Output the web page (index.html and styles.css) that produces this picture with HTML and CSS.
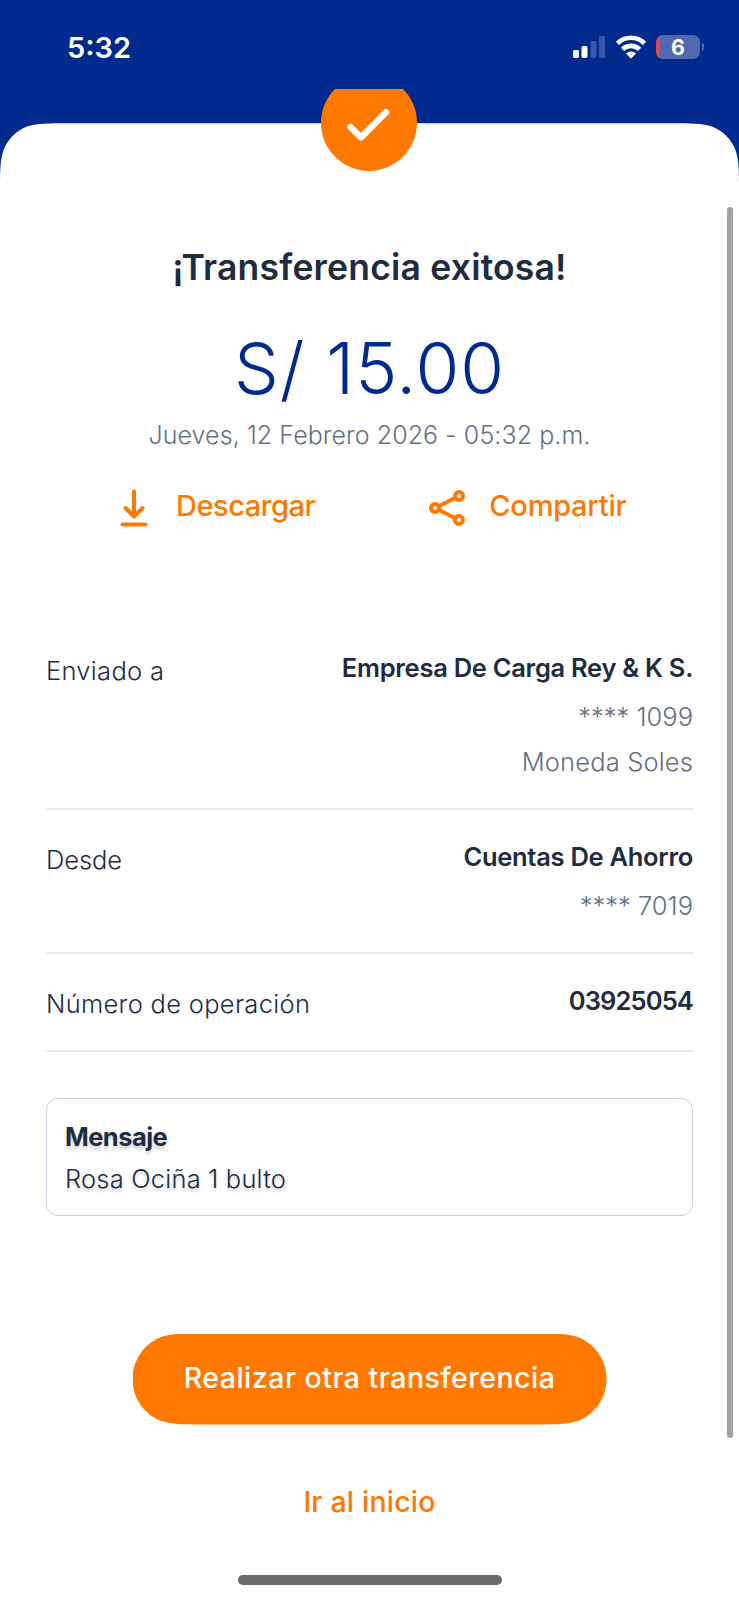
FILE: index.html
```html
<!DOCTYPE html>
<html lang="es">
<head>
<meta charset="utf-8">
<title>Transferencia exitosa</title>
<link rel="stylesheet" href="styles.css">
</head>
<body>
<div class="screen">
  <header class="status">
    <span class="clock">5:32</span>
    <div class="status-icons">
      <svg class="signal" width="34" height="24" viewBox="0 0 34 24"><g fill="#fff"><rect x="1" y="15" width="6" height="8" rx="1.7"/><rect x="9.5" y="11" width="6" height="12" rx="1.7"/><g opacity=".22"><rect x="18.5" y="6" width="6" height="17" rx="1.7"/><rect x="27" y="1" width="6" height="22" rx="1.7"/></g></g></svg>
      <svg class="wifi" width="32" height="24" viewBox="0 0 32 24"><g fill="none" stroke="#fff" stroke-width="4.6"><path d="M2.500 8.400a19.100 19.100 0 0 1 27 0"/><path d="M7.500 14.400a12 12 0 0 1 17 0"/></g><path d="M11 18.600a7.200 7.200 0 0 1 10 0l-4.300 4.300a1 1 0 0 1-1.400 0z" fill="#fff"/></svg>
      <div class="battery">6</div>
      <i class="battery-tip"></i>
    </div>
  </header>
  <main class="sheet">
    <h1 class="title">¡Transferencia exitosa!</h1>
    <p class="amount">S/ 15.00</p>
    <p class="date">Jueves, 12 Febrero 2026 - 05:32 p.m.</p>
    <div class="actions">
      <a class="action download"><svg width="28" height="38" viewBox="0 0 28 38" fill="none" stroke="#ff7800" stroke-width="4" stroke-linecap="round" stroke-linejoin="round"><path d="M14 2.500V26M5.500 19l8.500 8.500 8.500-8.500M2.500 35.500h23"/></svg><span>Descargar</span></a>
      <a class="action share"><svg width="36" height="38" viewBox="0 0 36 38" fill="none" stroke="#ff7800" stroke-width="4"><circle cx="6" cy="19" r="4"/><circle cx="30" cy="7" r="4"/><circle cx="30" cy="31" r="4"/><path d="M9.500 17.300l17-8.500M9.500 20.700l17 8.500"/></svg><span>Compartir</span></a>
    </div>
    <section class="details">
      <div class="row">
        <div class="label">Enviado a</div>
        <div class="values"><strong>Empresa De Carga Rey &amp; K S.</strong><span class="sub">**** 1099</span><span class="sub currency">Moneda Soles</span></div>
      </div>
      <div class="row">
        <div class="label short">Desde</div>
        <div class="values"><strong>Cuentas De Ahorro</strong><span class="sub">**** 7019</span></div>
      </div>
      <div class="row operation">
        <div class="label">Número de operación</div>
        <div class="values"><strong>03925054</strong></div>
      </div>
    </section>
    <section class="message">
      <h2>Mensaje</h2>
      <p>Rosa Ociña 1 bulto</p>
    </section>
    <button class="primary">Realizar otra transferencia</button>
    <a class="home-link">Ir al inicio</a>
    <div class="home-indicator"></div>
  </main>
  <div class="badge"><svg width="96" height="83" viewBox="0 0 96 83"><path d="M14 0H82A48 48 0 1 1 14 0z" fill="#ff7800"/><path d="M29.500 38L40 48.500L65 23.200" fill="none" stroke="#fff" stroke-width="6.500" stroke-linecap="round" stroke-linejoin="round"/></svg></div>
  <div class="scrollbar"></div>
</div>
</body>
</html>
```
FILE: styles.css
```css
* { box-sizing: border-box; }
body { margin: 0; background: #fff; }
h1, h2, p { margin: 0; font-weight: inherit; }
.screen {
  position: relative;
  width: 739px;
  height: 1600px;
  overflow: hidden;
  background: #002a8d;
  color: #1f2c40;
  font-family: Inter, "Noto Sans", sans-serif;
  font-weight: 300;
  white-space: nowrap;
}
.status { height: 123px; padding: 30px 35px 0 67px; display: flex; justify-content: space-between; align-items: flex-start; color: #fff; }
.clock { font-size: 29px; line-height: 35px; font-weight: 600; }
.status-icons { display: flex; align-items: center; padding-top: 5px; }
.wifi { margin: 0 9px; }
.battery { width: 44px; height: 24px; border-radius: 7px; background: linear-gradient(90deg, #dd4557 4px, #5069b0 4px); text-align: center; font-weight: 700; font-size: 21.5px; line-height: 24px; }
.battery-tip { width: 2px; height: 8px; margin-left: 2px; border-radius: 0 3px 3px 0; background: #5069b0; }
.sheet {
  height: 1477px;
  background: #fefefe;
  display: flex;
  flex-direction: column;
  clip-path: path("M0 1477V67.3C0 47.9 0 38.2 3.3 27.8C7.4 16.4 16.4 7.4 27.8 3.3C38.2 0.3 47.9 0.3 67.3 0.3H671.7C691.1 0.3 700.8 0.3 711.2 3.3C722.6 7.4 731.6 16.4 735.7 27.8C739 38.2 739 47.9 739 67.3V1477Z");
}
.sheet > * { flex-shrink: 0; }
.title { margin-top: 122px; text-align: center; font-size: 35.5px; line-height: 46px; font-weight: 600; letter-spacing: .2px; }
.amount { margin-top: 33px; text-align: center; font-size: 71px; line-height: 88px; color: #002a8d; letter-spacing: .9px; }
.date { margin-top: 7px; text-align: center; font-size: 25px; line-height: 32px; color: #657084; letter-spacing: .08px; }
.actions { margin-top: 31px; display: flex; padding-left: 120px; color: #ff7800; }
.action { display: flex; align-items: center; height: 48px; gap: 28px; font-size: 29px; line-height: 48px; font-weight: 500; }
.action svg { margin-top: 4px; }
.download { letter-spacing: -.45px; }
.share { margin-left: 114px; gap: 24px; letter-spacing: -.25px; }
.details { margin: 91px 46px 0; font-size: 25.5px; }
.row { display: flex; justify-content: space-between; border-bottom: 2px solid #e8e8ea; padding: 29px 0 23.5px; }
.label { line-height: 36px; padding-top: 3px; letter-spacing: .3px; }
.short { letter-spacing: -.1px; }
.values { display: flex; flex-direction: column; align-items: flex-end; }
.values strong { font-weight: 600; line-height: 36px; margin-bottom: 7.5px; letter-spacing: -.28px; }
.sub { color: #657084; line-height: 45.5px; }
.currency { letter-spacing: .15px; }
.operation strong { letter-spacing: -.86px; }
.message { margin: 46px 46px 0; height: 118px; border: 1px solid #c6cfe3; border-radius: 12px; padding: 17px 18px; font-size: 25.5px; text-shadow: 0 3px 3px rgba(31, 44, 64, .2); }
.message h2 { font-size: 25.5px; font-weight: 700; line-height: 42px; letter-spacing: -.55px; }
.message p { line-height: 42px; letter-spacing: .2px; }
.primary {
  margin: 118px auto 0;
  width: 474px;
  height: 91px;
  padding: 0 0 4px;
  border: 0;
  background: #ff7800;
  color: #fff;
  font: 500 28.5px/87px Inter, "Noto Sans", sans-serif;
  letter-spacing: .5px;
  clip-path: path("M70 0C50 0 40 0 28.7 3.4C12 10 0 26 0 45.5C0 65 12 81 28.7 87.6C40 91 50 91 70 91H404C424 91 434 91 445.3 87.6C462 81 474 65 474 45.5C474 26 462 10 445.3 3.4C434 0 424 0 404 0Z");
}
.home-link { margin-top: 56px; text-align: center; color: #ff7800; font-size: 28.5px; line-height: 42px; font-weight: 500; letter-spacing: .21px; }
.home-indicator { width: 264px; height: 10px; margin: 52px auto 0; border-radius: 5px; background: #696969; }
.badge { position: absolute; left: 321px; top: 89px; width: 96px; height: 83px; }
.badge svg { display: block; }
.scrollbar { position: absolute; left: 727px; top: 207px; width: 6px; height: 1231px; border-radius: 3px; background: #a3a3a3; }
```
